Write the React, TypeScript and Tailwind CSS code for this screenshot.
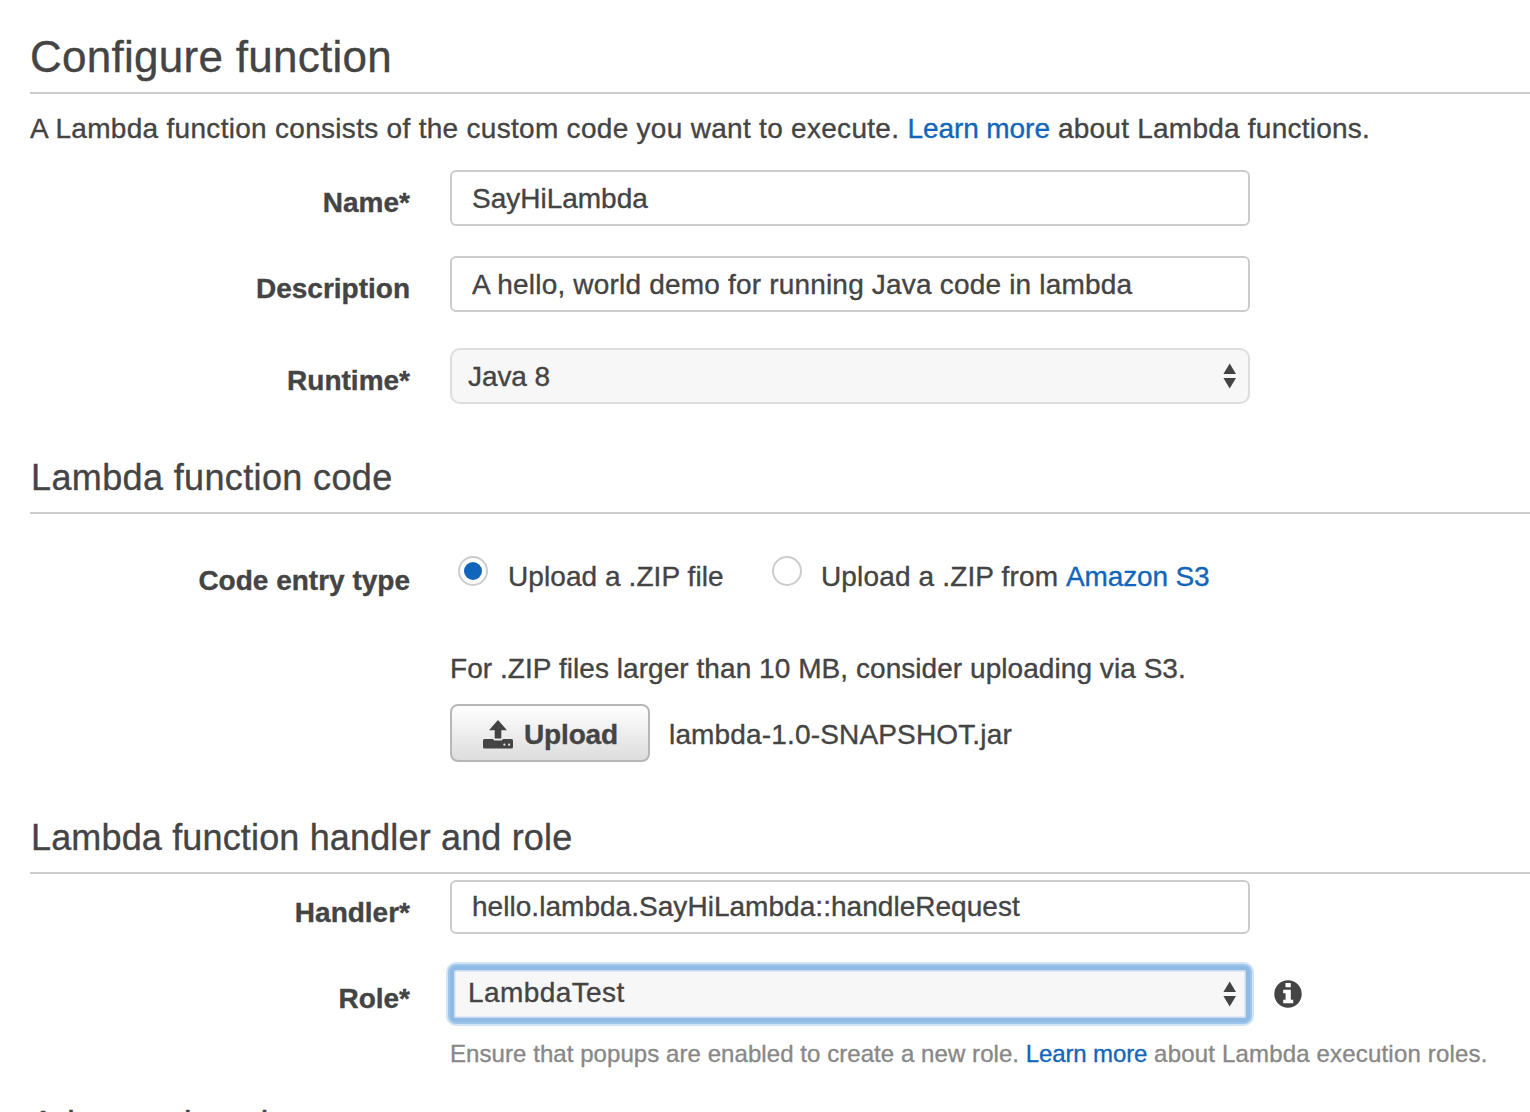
import type { ReactNode } from 'react';

function Heading({ children, className }: { children: ReactNode; className: string }) {
  return (
    <h2 className={`border-b-2 border-[#ccc] text-[36px] leading-[44px] pb-3 pl-px font-normal whitespace-nowrap ${className}`}>
      {children}
    </h2>
  );
}

function Row({ label, labelClass = 'mt-[15px]', className = '', children }: { label: string; labelClass?: string; className?: string; children: ReactNode }) {
  return (
    <div className={`flex items-start ${className}`}>
      <label className={`w-[380px] mr-10 shrink-0 text-right font-bold leading-9 whitespace-nowrap ${labelClass}`}>{label}</label>
      {children}
    </div>
  );
}

function SelectArrows() {
  return (
    <svg width="14" height="26" viewBox="0 0 14 26" className="fill-[#444]">
      <path d="M6.700 0.500 13 11H0.400Z" />
      <path d="M6.700 25.500 13 15H0.400Z" />
    </svg>
  );
}

function UploadIcon() {
  return (
    <svg width="30" height="29" viewBox="0 0 30 29" className="mt-[3px] fill-[#444]">
      <path d="M15 0 24 10.3H18.3V18.5H11.7V10.3H6Z" />
      <path
        fillRule="evenodd"
        d="M1.500 19H10.200Q10.600 20.600 12 20.600H18Q19.400 20.600 19.800 19H28.500Q30 19 30 20.500V27Q30 28.500 28.500 28.500H1.500Q0 28.500 0 27V20.500Q0 19 1.500 19ZM20.300 24.700a1.100 1.100 0 1 0 2.200 0a1.100 1.100 0 1 0-2.200 0ZM25 24.700a1.100 1.100 0 1 0 2.200 0a1.100 1.100 0 1 0-2.200 0Z"
      />
    </svg>
  );
}

function InfoIcon() {
  return (
    <svg width="28" height="28" viewBox="0 0 28 28">
      <circle cx="14" cy="14" r="13.7" fill="#444" />
      <path fill="#fff" d="M11.500 3H16.800V7.300H11.500ZM9.200 9.700H16.800V19.700H19.200V23.300H9.200V19.700H11.600V13.300H9.200Z" />
    </svg>
  );
}

export default function App() {
  return (
    <div className="flex h-[1112px] w-full flex-col overflow-hidden bg-white pl-[30px] pt-[33px] font-['Liberation_Sans',Arial,sans-serif] text-[28px] text-[#444] [-webkit-text-stroke:0.35px]">
      <h1 className="border-b-2 border-[#ccc] pb-[11px] text-[44px] leading-[48px] tracking-[0.27px] font-normal">Configure function</h1>
      <p className="mt-[17px] leading-9 whitespace-nowrap">
        <span className="tracking-[0.295px]">A Lambda function consists of the custom code you want to execute. </span>
        <a className="tracking-[-0.068px] text-[#1166bb]">Learn more</a>
        <span className="tracking-[0.24px]"> about Lambda functions.</span>
      </p>

      <Row label="Name*" className="mt-[23px]">
        <div className="flex h-14 w-[800px] items-center rounded-md border-2 border-[#ccc] pl-5 pt-0.5 tracking-[-0.01px]">SayHiLambda</div>
      </Row>
      <Row label="Description" className="mt-[30px]">
        <div className="flex h-14 w-[800px] items-center rounded-md border-2 border-[#ccc] pl-5 pt-0.5 tracking-[0.19px]">A hello, world demo for running Java code in lambda</div>
      </Row>
      <Row label="Runtime*" className="mt-9">
        <div className="flex h-14 w-[800px] items-center justify-between rounded-[10px] border-2 border-[#ddd] bg-[#f7f7f7] pl-4 pr-[11px]">
          <span className="pt-0.5 tracking-[-0.08px]">Java 8</span>
          <SelectArrows />
        </div>
      </Row>

      <Heading className="mt-[52px] tracking-[0.37px]">Lambda function code</Heading>

      <Row label="Code entry type" labelClass="mt-[7px]" className="mt-[42px] h-[42px]">
        <span className="ml-2 flex size-[30px] shrink-0 items-center justify-center rounded-full border-2 border-[#ccc]">
          <span className="size-[18px] rounded-full bg-[#1166bb]" />
        </span>
        <span className="ml-5 mt-[3px] w-[264px] shrink-0 leading-9 tracking-[0.08px]">Upload a .ZIP file</span>
        <span className="size-[30px] shrink-0 rounded-full border-2 border-[#ccc]" />
        <span className="ml-[19px] mt-[3px] leading-9 whitespace-nowrap">
          <span className="tracking-[0.15px]">Upload a .ZIP from </span>
          <a className="tracking-[-0.17px] text-[#1166bb]">Amazon S3</a>
        </span>
      </Row>

      <div className="ml-[420px] mt-[53px]">
        <p className="leading-9 tracking-[0.055px]">For .ZIP files larger than 10 MB, consider uploading via S3.</p>
        <div className="mt-[17px] flex h-[58px] items-center">
          <button className="flex h-[58px] w-[200px] items-center rounded-lg border-2 border-[#b7b7b7] bg-linear-to-b from-white to-[#ddd] pl-[31px] font-bold tracking-[-0.15px]">
            <UploadIcon />
            <span className="ml-[11px] pt-[3px]">Upload</span>
          </button>
          <span className="ml-[19px] pt-[3px] tracking-[0.16px]">lambda-1.0-SNAPSHOT.jar</span>
        </div>
      </div>

      <Heading className="mt-[54px] tracking-[0.155px]">Lambda function handler and role</Heading>

      <Row label="Handler*" className="mt-1.5 h-[54px]">
        <div className="flex h-[54px] w-[800px] items-center rounded-md border-2 border-[#ccc] pl-5 tracking-[0.037px]">hello.lambda.SayHiLambda::handleRequest</div>
      </Row>
      <Row label="Role*" className="mt-8 h-14">
        <div className="flex h-14 w-[800px] items-center justify-between rounded-md border-4 border-[#8fbae3] bg-[#f7f7f7] pl-3.5 pr-[9px] shadow-[0_0_0_2px_#a0c5ea,0_0_0_4px_#d3e4f5,inset_0_0_0_1.5px_#c9dcf0]">
          <span className="pb-0.5 tracking-[0.41px]">LambdaTest</span>
          <SelectArrows />
        </div>
        <span className="ml-6 mt-3.5"><InfoIcon /></span>
      </Row>
      <p className="ml-[420px] mt-4 text-[24px] leading-8 whitespace-nowrap text-[#888]">
        <span className="tracking-[0.065px]">Ensure that popups are enabled to create a new role. </span>
        <a className="tracking-[-0.13px] text-[#1166bb]">Learn more</a>
        <span className="tracking-[0.18px]"> about Lambda execution roles.</span>
      </p>
      <h2 className="mt-[33px] shrink-0 pl-px text-[36px] leading-[44px] tracking-[0.1px] font-normal">Advanced settings</h2>
    </div>
  );
}
